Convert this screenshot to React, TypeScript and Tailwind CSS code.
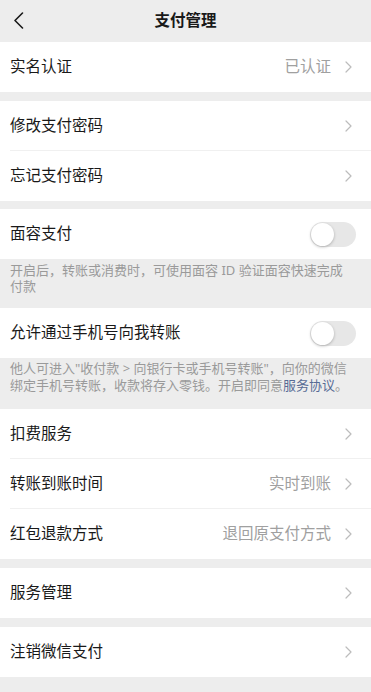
const font = { fontFamily: '"Noto Sans", "Noto Sans CJK SC", sans-serif' };

const Chevron = () => (
  <svg width="7" height="12" viewBox="0 0 7 12" fill="none" className="shrink-0">
    <polyline points="1,1 6,6 1,11" stroke="#bcbcbc" strokeWidth="1.2" strokeLinecap="round" strokeLinejoin="round" />
  </svg>
);

const Row = ({
  label,
  value,
  divider,
}: {
  label: string;
  value?: string;
  divider?: boolean;
}) => (
  <div className="relative flex h-[50px] items-center bg-white pl-[10px] pr-[19px]">
    <span className="flex-1 text-[15.5px] text-[#191919]">{label}</span>
    {value && <span className="mr-[14px] text-[15.5px] text-[#a0a0a0]">{value}</span>}
    <Chevron />
    {divider && <div className="absolute bottom-0 left-[10px] right-0 h-px bg-[#f0f0f0]" />}
  </div>
);

const Toggle = () => (
  <div className="flex h-[25px] w-[46px] items-center rounded-full bg-[#e7e7e7] p-[1px]">
    <div className="h-[23px] w-[23px] rounded-full bg-white shadow-[0_1px_3px_rgba(0,0,0,0.25)]" />
  </div>
);

const ToggleRow = ({ label }: { label: string }) => (
  <div className="flex h-[50px] items-center bg-white pl-[10px] pr-[15px]">
    <span className="flex-1 text-[15.5px] text-[#191919]">{label}</span>
    <Toggle />
  </div>
);

export default function App() {
  return (
    <div className="min-h-[692px] w-full bg-[#ededed]" style={font}>
      {/* Header */}
      <div className="relative flex h-[42px] items-center justify-center bg-[#ededed]">
        <svg
          width="11"
          height="17"
          viewBox="0 0 11 17"
          fill="none"
          className="absolute left-[13px] top-[12px]"
        >
          <polyline points="9.5,1 2,8.5 9.5,16" stroke="#1a1a1a" strokeWidth="1.6" strokeLinecap="round" strokeLinejoin="round" />
        </svg>
        <span className="text-[15.5px] font-semibold text-[#191919]">支付管理</span>
      </div>

      <Row label="实名认证" value="已认证" />

      <div className="mt-[9px]">
        <Row label="修改支付密码" divider />
        <Row label="忘记支付密码" />
      </div>

      <div className="mt-[8px]">
        <ToggleRow label="面容支付" />
        <div className="pl-[10px] pr-[22px] pb-[14px] pt-[3px] text-[13px] leading-[16px] text-[#9a9a9a]">
          开启后，转账或消费时，可使用面容 ID 验证面容快速完成付款
        </div>
      </div>

      <div>
        <ToggleRow label="允许通过手机号向我转账" />
        <p className="pl-[10px] pr-[20px] pb-[15px] pt-[2px] text-[13px] leading-[17px] text-[#9a9a9a]">
          他人可进入"收付款 &gt; 向银行卡或手机号转账"，向你的微信绑定手机号转账，收款将存入零钱。开启即同意<a className="text-[#576b95]">服务协议</a>。
        </p>
      </div>

      <div>
        <Row label="扣费服务" divider />
        <Row label="转账到账时间" value="实时到账" divider />
        <Row label="红包退款方式" value="退回原支付方式" />
      </div>

      <div className="mt-[9px]">
        <Row label="服务管理" />
      </div>

      <div className="mt-[9px]">
        <Row label="注销微信支付" />
      </div>
    </div>
  );
}
